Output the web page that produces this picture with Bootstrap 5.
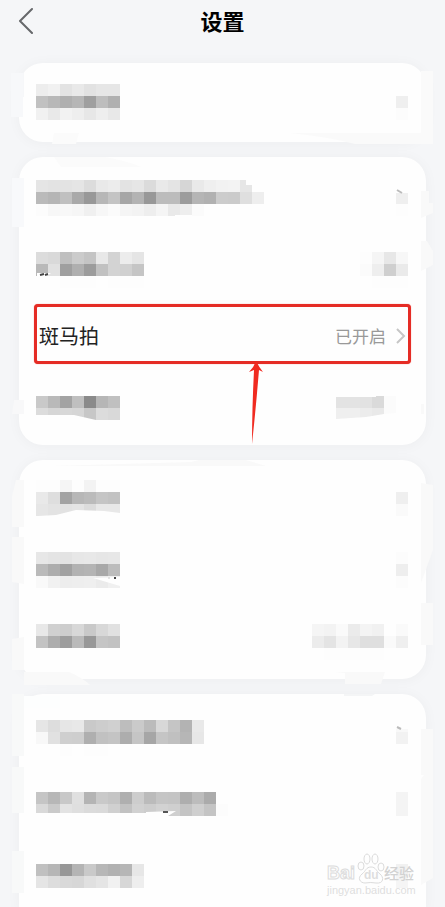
<!DOCTYPE html>
<html lang="zh-CN">
<head>
<meta charset="utf-8">
<meta name="viewport" content="width=device-width, initial-scale=1">
<title>设置</title>
<link href="https://cdn.jsdelivr.net/npm/bootstrap@5.3.0/dist/css/bootstrap.min.css" rel="stylesheet">
<style>
body{background:#f5f6f8;font-family:"Noto Sans CJK SC",sans-serif;color:#222}
.topbar{height:63px;padding:0 15px 24px}
.side-slot{width:32px}
.page-title{font-size:22px;line-height:32px;font-weight:700;color:#000}
.groups{gap:15px;padding:0 19px}
.group-box{background:#fefefe;border-radius:24px;box-shadow:0 1px 14px rgba(40,50,60,.04)}
.group-last{border-radius:24px 24px 0 0}
.setting{height:72px;padding:0 18px 0 17px}
.single .setting{height:79px;padding-top:21px}
.four .setting{padding-top:23px}
.three{padding-bottom:3px}
.three .setting{padding-top:20px}
.group-last .setting{padding-top:26px}
.four .setting.picked{padding:3px 15px}
.pick-btn{height:60px;border:3px solid #e52c25;border-radius:4px;padding:3px 1px 0 2px;background:#fefefe;box-shadow:0 0 1px #f46b60;color:#222}
.pick-name{font-size:20px;line-height:28px}
.pick-state{font-size:17px;line-height:28px;color:#999;gap:10px}
.pointer{left:228px;top:60px}
.patch-l{left:-8px;top:0}
.patch-r{right:-7px;top:0}
.water{right:9px;top:12px}
svg{display:block;flex:none}
</style>
<script src="https://cdn.jsdelivr.net/npm/bootstrap@5.3.0/dist/js/bootstrap.bundle.min.js"></script>
</head>
<body>
<div class="d-flex flex-column vh-100 overflow-hidden">
<header class="topbar d-flex align-items-center justify-content-between flex-shrink-0">
  <button type="button" class="btn p-0 border-0 side-slot" aria-label="返回"><svg width="22" height="28" viewBox="0 0 22 28" fill="none" stroke="#66686b" stroke-width="2" stroke-linecap="round" stroke-linejoin="round"><path d="M17 3 5 15l12 12"/></svg></button>
  <h1 class="page-title m-0">设置</h1>
  <span class="side-slot"></span>
</header>
<main class="groups d-flex flex-column flex-grow-1">
  <section class="group-box single position-relative flex-shrink-0">
    <svg class="patch-l position-absolute" width="90" height="82" aria-hidden="true"><path fill="#f6f7f9" d="M0 10H13V34H0z"/><path fill="#f7f8fa" d="M0 10H12V54H0z"/><path fill="#fbfbfb" d="M43 70H68L65 81H41z"/></svg>
    <svg class="patch-r position-absolute" width="150" height="82" aria-hidden="true"><path fill="#fafafa" d="M7 70H150V81H72Q46 74 7 70zM138 8H150V70H138z"/></svg>
    <div class="setting d-flex justify-content-between position-relative">
      <svg data-cells="ed f1 e3 e9 e2 e6 e6|c1 b8 af b6 9f bd b0|f1 e9 f2 ee e7 ee e8"></svg>
      <svg data-cells="fe|ef|fc"></svg>
    </div>
  </section>

  <section class="group-box four position-relative flex-shrink-0">
    <svg class="patch-l position-absolute" width="150" height="285" aria-hidden="true"><path fill="#f8f9fb" d="M1 21H13V70H1z"/><path fill="#f8f8f9" d="M3 243H13V257H1z"/><path fill="#fbfbfb" d="M43 0H94Q120 5 130 10H50z"/></svg>
    <svg class="patch-r position-absolute" width="18" height="285" aria-hidden="true"><path fill="#f9f9f9" d="M6 34H14V46H18V56L6 61zM6 84H12L18 94V108L6 114zM6 247H9V257H6z"/></svg>
    <div class="setting d-flex justify-content-between position-relative">
      <svg data-cells="e5 e3 e3 e5 dc e9 ec e3 e6 db e9 e4 d6 e9 ef f2 f3 e6 fc|ba b5 c0 a9 98 b7 c4 a6 b3 98 bc bc 9c b5 b1 cc cb df ee|fc f7 f8 f6 f0 f7 fb f5 f3 ee f5 e9 ee fb fe fe fe fe fe"><path fill="#fefefe" d="M210 0H228V12H216V5H210zM139 35H156V36H139z"/></svg>
      <svg data-cells="fe|ef|fd"><path fill="#fefefe" d="M0 12H12V13H0z"/><path d="m1 10 5 3" stroke="#bbb" stroke-width="2"/></svg>
    </div>
    <div class="setting d-flex justify-content-between position-relative">
      <svg data-cells="dc d9 bf cb c4 e8 d3 ec e5|b9 e1 9f af 9c c1 d3 d0 c5|fe fe fd fd fd fe fd fd fd"><path fill="#fff" d="M1 21H15L11 24H1z"/><path stroke="#444" stroke-width="2" d="m4 23 4-1m1 1 3-1"/></svg>
      <svg data-cells="fd f5 e7 f7|fb ee cf ea|fe fd fd fd"></svg>
    </div>
    <div class="setting picked position-relative">
      <button type="button" class="pick-btn d-flex w-100 align-items-center justify-content-between">
        <span class="pick-name">斑马拍</span>
        <span class="pick-state d-flex align-items-center">已开启<svg width="11" height="18" viewBox="0 0 11 18" fill="none" stroke="#c6c6c6" stroke-width="2"><path d="m1 2 7 7-7 7"/></svg></span>
      </button>
      <svg class="pointer position-absolute" width="20" height="84" viewBox="0 0 20 84"><path fill="#f02a20" d="M9 0Q12 6 16 11L12 9Q9 46 5 83Q5 48 7 9L2 11Q7 6 9 0z"/></svg>
    </div>
    <div class="setting d-flex justify-content-between position-relative">
      <svg data-cells="c9 b9 a3 bf 8a b6 c0|dc d6 d8 d6 c7 dc d9|fe fe fe fe fe fe fe"><path fill="#fefefe" d="M0 19H38L60 24H0z"/></svg>
      <svg data-cells="e3 e3 e2 da fb fe|ef ef ec e9 fb fe|fe fe fe fe fe fe"><path fill="#fefefe" d="M0 0H40V1H0zM0 23 30 21 48 18 60 17V25H0z"/></svg>
    </div>
  </section>

  <section class="group-box three position-relative flex-shrink-0">
    <svg class="patch-l position-absolute" width="280" height="226" aria-hidden="true"><path fill="#f9f9f9" d="M5 20H13V67H1V36zM1 77H13V124L1 122zM1 179 13 177V210H1zM13 212H58Q72 218 79 225H13zM40 6 180 2 200-3H225L255 6z"/></svg>
    <svg class="patch-r position-absolute" width="110" height="226" aria-hidden="true"><path fill="#f9f9f9" d="M98 23 110 25V90L98 123zM98 143H110V185H98zM12 212H62L58 224H22V213z"/></svg>
    <div class="setting d-flex justify-content-between position-relative">
      <svg data-cells="fd fd f5 fd f3 fd fd|e9 de a3 b7 bb c5 c2|e6 e3 e2 e4 dc e8 e8"><path fill="#fefefe" d="M2 36 20 35 40 30 68 31 84 33V36z"/></svg>
      <svg data-cells="fe|ef|fa"></svg>
    </div>
    <div class="setting d-flex justify-content-between position-relative">
      <svg data-cells="e7 e4 e3 e7 e8 e6 e7|ba ad a1 b2 b4 a8 bc|f9 f1 ed ee ef eb f0"><path fill="#fefefe" d="M57 26 84 25V34z"/><path stroke="#444" stroke-width="2" d="M78 26h2"/><path stroke="#ccc" d="M72 26h2"/></svg>
      <svg data-cells="fc|ee|fc"></svg>
    </div>
    <div class="setting d-flex justify-content-between position-relative">
      <svg data-cells="e8 d0 cd d8 c9 d8 e1|c3 ad 9d ba 98 c5 c2|fe fe fe fe fe fe fe"></svg>
      <svg data-cells="f5 f3 fa eb f4 f1 fe fa|ec e4 f3 e7 df df fa ef|fe fd fd fd fd fd fe fe"></svg>
    </div>
  </section>

  <section class="group-box group-last position-relative flex-grow-1">
    <svg class="patch-l position-absolute" width="140" height="213" aria-hidden="true"><path fill="#f8f9f9" d="M1 0H13V62H1zM1 73H13V119H1zM1 157H13V199H1z"/><path fill="#fdfefe" d="M13 2H49V14H13z"/></svg>
    <svg class="patch-r position-absolute" width="92" height="213" aria-hidden="true"><path fill="#f9f9f9" d="M80 35H92V184L80 191V85L83 81H80z"/><path fill="#f4f5f6" d="M3 0H34L31 2H3z"/></svg>
    <div class="setting d-flex justify-content-between position-relative">
      <svg data-cells="e6 dd e6 e8 c9 cd d0 bd ca bb d8 c5 b3 e9|f8 e1 cf ce af c1 c4 ad c5 a6 c5 c0 b6 e7|fe fe fd fe fd fd fe fe fe fe fe fe fe fe"></svg>
      <svg data-cells="fe|f2|fe"><path fill="#f8f8f8" d="M0 9H12V12H0z"/><path stroke="#bbb" stroke-width="2" d="m1 7 4 2"/></svg>
    </div>
    <div class="setting d-flex justify-content-between position-relative">
      <svg data-cells="c5 b7 c8 e0 b4 c9 c5 af cd bb c5 c4 ae bc ab fe|d9 ca e3 df db da d0 c2 d1 cd d2 cf c4 cf c4 fc|fe fe fe fe fe fe fe fe fe fe fe fe fe fe fe fe"><path fill="#fefefe" d="M0 21H110V20L140 19 132 24H0z"/><path stroke="#555" stroke-width="2" d="M127 20h5"/></svg>
      <svg data-cells="f4|f4|fe"></svg>
    </div>
    <div class="setting d-flex justify-content-between position-relative">
      <svg data-cells="c0 b6 97 b4 c9 b7 b1 b6 e7|e5 dd d9 d7 e0 e5 f1 d7 ee|fe fe fe fe fe fe fe fe fe"></svg>
      <svg data-cells="f1|f5|fe"></svg>
      <svg class="water position-absolute" width="92" height="48" viewBox="0 0 92 48" fill="#fefefe" stroke="#dcdcdc" stroke-width="1">
        <text x="2" y="29" font-size="18" font-weight="700" font-family="Liberation Sans,sans-serif">Bai</text>
        <ellipse cx="36" cy="16" rx="3" ry="4"/><ellipse cx="42" cy="9" rx="3" ry="5"/><ellipse cx="50" cy="9" rx="3" ry="5"/><ellipse cx="56" cy="17" rx="3" ry="4"/>
        <path d="M46 17C41 17 41 21 37 24C32 28 35 33 40 33Q46 32 51 33C59 34 59 27 55 24C51 21 51 17 46 17z"/>
        <text x="39" y="29" font-size="12" font-weight="700" font-family="Liberation Sans,sans-serif" fill="#dedede" stroke="none">du</text>
        <text x="59" y="29" font-size="15" font-weight="500" font-family="Noto Sans CJK SC,sans-serif" fill="#d2d2d2" stroke="none">经验</text>
        <text x="2" y="44" font-size="11" font-family="Liberation Sans,sans-serif" fill="#dedede" stroke="none">jingyan.baidu.com</text>
      </svg>
    </div>
  </section>
</main>
</div>
<script>
// Build each pixelated label from its rows of grey levels, 12px per cell.
document.querySelectorAll('svg[data-cells]').forEach(function(svg){
  var ns='http://www.w3.org/2000/svg', g=document.createElementNS(ns,'g');
  var rows=svg.dataset.cells.split('|').map(function(r){return r.split(' ')});
  svg.setAttribute('width',rows[0].length*12);
  svg.setAttribute('height',36);
  svg.setAttribute('aria-hidden','true');
  g.setAttribute('shape-rendering','crispEdges');
  rows.forEach(function(row,y){row.forEach(function(c,x){
    var r=document.createElementNS(ns,'rect');
    r.setAttribute('x',x*12);r.setAttribute('y',y*12);
    r.setAttribute('width',12);r.setAttribute('height',12);
    r.setAttribute('fill','#'+c+c+c);g.appendChild(r);
  })});
  svg.prepend(g);
});
</script>
</body>
</html>
